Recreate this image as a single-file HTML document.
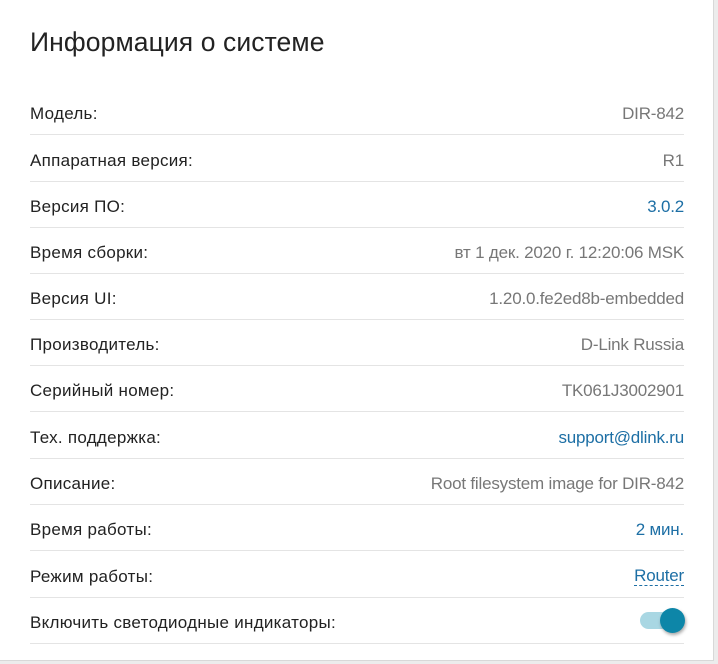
<!DOCTYPE html>
<html><head><meta charset="utf-8"><style>
body{margin:0;width:718px;height:664px;background:#ececec;overflow:hidden;font-family:"Liberation Sans",sans-serif;}
.card{position:absolute;left:0;top:0;width:713px;height:660px;background:#fff;border-right:1px solid #d8d8d8;border-bottom:1px solid #d8d8d8;}
h1{position:absolute;left:30px;top:27px;margin:0;font-weight:normal;font-size:26.5px;color:#222;letter-spacing:0.1px}
.row{position:absolute;left:30px;width:654px;height:46px;border-bottom:1px solid #e4e4e4;font-size:17px;}
.row span{position:absolute;top:16px;}
.l{left:0;color:#222;letter-spacing:0.28px}.r{right:0;color:#777;letter-spacing:-0.2px}
.b{color:#1d6fa5!important}
.tr{position:absolute;right:0;top:15px;width:44px;height:17px;border-radius:9px;background:#a9d7e3}
.kn{position:absolute;left:20px;top:-4px;width:25px;height:25px;border-radius:50%;background:#0d86a8;box-shadow:1px 2px 3px rgba(0,0,0,.35)}
</style></head><body><div class="card">
<h1>Информация о системе</h1>
<div class="row" style="top:88px"><span class="l">Модель:</span><span class="r">DIR-842</span></div>
<div class="row" style="top:135px"><span class="l">Аппаратная версия:</span><span class="r">R1</span></div>
<div class="row" style="top:181px"><span class="l">Версия ПО:</span><span class="r b">3.0.2</span></div>
<div class="row" style="top:227px"><span class="l">Время сборки:</span><span class="r">вт 1 дек. 2020 г. 12:20:06 MSK</span></div>
<div class="row" style="top:273px"><span class="l">Версия UI:</span><span class="r">1.20.0.fe2ed8b-embedded</span></div>
<div class="row" style="top:319px"><span class="l">Производитель:</span><span class="r">D-Link Russia</span></div>
<div class="row" style="top:365px"><span class="l">Серийный номер:</span><span class="r">TK061J3002901</span></div>
<div class="row" style="top:412px"><span class="l">Тех. поддержка:</span><span class="r b">support@dlink.ru</span></div>
<div class="row" style="top:458px"><span class="l">Описание:</span><span class="r">Root filesystem image for DIR-842</span></div>
<div class="row" style="top:504px"><span class="l">Время работы:</span><span class="r b">2 мин.</span></div>
<div class="row" style="top:551px"><span class="l">Режим работы:</span><span class="r b" style="border-bottom:1px dashed #1d6fa5;line-height:18px">Router</span></div>
<div class="row" style="top:597px"><span class="l">Включить светодиодные индикаторы:</span><div class="tr"><div class="kn"></div></div></div>
</div></body></html>
